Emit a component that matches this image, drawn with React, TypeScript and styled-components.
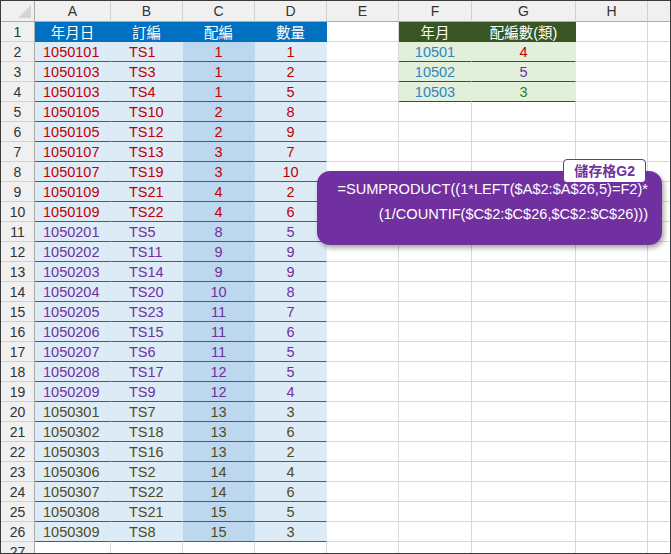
import React from "react"
import styled, { createGlobalStyle } from "styled-components"

const Global = createGlobalStyle`
  body { margin: 0; background: #fff; }
  * { box-sizing: border-box; }
`

const Frame = styled.div`
  position: relative;
  width: 671px;
  height: 554px;
  border: 1px solid #3a3a3a;
  overflow: hidden;
  font-family: "Liberation Sans", "Noto Sans CJK TC", sans-serif;
`

const Sheet = styled.div`
  display: grid;
  grid-template-columns: 34px 76px 72px 72px 72px 72px 73px 104px 72px 1fr;
  grid-template-rows: 21px;
  grid-auto-rows: 20px;
`

const Cell = styled.div<{ $bg?: string; $color?: string; $align?: string; $line?: string; $noV?: boolean }>`
  display: flex;
  align-items: center;
  justify-content: ${(p) => p.$align || "flex-start"};
  padding: 0 8px;
  font-size: 14.5px;
  white-space: nowrap;
  background: ${(p) => p.$bg || "#fff"};
  color: ${(p) => p.$color || "#222"};
  border-bottom: 1px solid ${(p) => p.$line || "#d9d9d9"};
  border-right: 1px solid ${(p) => (p.$noV ? "transparent" : "#d9d9d9")};
`

const ColHead = styled(Cell)`
  background: #f0f0f0;
  justify-content: center;
  color: #333;
  border-bottom: 1px solid #ababab;
  border-right: 1px solid #d0d0d0;
  font-size: 14px;
`

const RowHead = styled(Cell)`
  background: #f0f0f0;
  justify-content: center;
  color: #333;
  padding: 0;
  border-right: 1px solid #ababab;
  border-bottom: 1px solid #d0d0d0;
  font-size: 14px;
`

const Corner = styled(ColHead)`
  border-right: 1px solid #ababab;
  position: relative;
  &::after {
    content: "";
    position: absolute;
    right: 3px;
    bottom: 3px;
    border-left: 13px solid transparent;
    border-bottom: 13px solid #d4d4d4;
  }
`

const Callout = styled.div`
  position: absolute;
  left: 316px;
  top: 170px;
  width: 345px;
  height: 74px;
  background: #7030a0;
  border-radius: 13px;
  box-shadow: 2px 3px 5px rgba(0, 0, 0, 0.35);
  color: #fff;
  font-size: 14.6px;
  text-align: right;
  padding: 6px 14px 0 0;
  line-height: 25px;
`

const Tag = styled.div`
  position: absolute;
  right: 16px;
  top: -12px;
  background: #fff;
  color: #7030a0;
  border: 1px solid #7030a0;
  border-radius: 4px;
  font-weight: bold;
  font-size: 14px;
  line-height: 22px;
  padding: 0 10px;
`

const data: [string, string, number, number][] = [
  ["1050101", "TS1", 1, 1], ["1050103", "TS3", 1, 2], ["1050103", "TS4", 1, 5],
  ["1050105", "TS10", 2, 8], ["1050105", "TS12", 2, 9], ["1050107", "TS13", 3, 7],
  ["1050107", "TS19", 3, 10], ["1050109", "TS21", 4, 2], ["1050109", "TS22", 4, 6],
  ["1050201", "TS5", 8, 5], ["1050202", "TS11", 9, 9], ["1050203", "TS14", 9, 9],
  ["1050204", "TS20", 10, 8], ["1050205", "TS23", 11, 7], ["1050206", "TS15", 11, 6],
  ["1050207", "TS6", 11, 5], ["1050208", "TS17", 12, 5], ["1050209", "TS9", 12, 4],
  ["1050301", "TS7", 13, 3], ["1050302", "TS18", 13, 6], ["1050303", "TS16", 13, 2],
  ["1050306", "TS2", 14, 4], ["1050307", "TS22", 14, 6], ["1050308", "TS21", 15, 5],
  ["1050309", "TS8", 15, 3],
]

const monthColor: Record<string, string> = { "01": "#c00000", "02": "#7030a0", "03": "#4f4a1e" }
const summary = [["10501", "4", "#c00000"], ["10502", "5", "#7030a0"], ["10503", "3", "#2e7d1e"]]

const BLUE = "#0070c0"

export default function App() {
  const rows: React.ReactNode[] = []
  rows.push(<Corner key="c" />)
  "ABCDEFGH".split("").forEach((c) => rows.push(<ColHead key={c}>{c}</ColHead>))
  rows.push(<ColHead key="x" style={{ borderRight: "none" }} />)

  for (let r = 1; r <= 27; r++) {
    rows.push(<RowHead key={"r" + r}>{r}</RowHead>)
    const d = data[r - 2]
    if (r === 1) {
      ;["年月日", "訂編", "配編", "數量"].forEach((t, i) =>
        rows.push(
          <Cell key={"h" + i} $bg={BLUE} $color="#fff" $align="center" $line={BLUE} $noV>
            {t}
          </Cell>
        )
      )
    } else if (d) {
      const col = monthColor[d[0].slice(3, 5)]
      rows.push(<Cell key={r + "a"} $bg="#ddebf7" $color={col} $line={BLUE} $noV>{d[0]}</Cell>)
      rows.push(<Cell key={r + "b"} $bg="#ddebf7" $color={col} $line={BLUE} $noV style={{ paddingLeft: 18 }}>{d[1]}</Cell>)
      rows.push(<Cell key={r + "c"} $bg="#bdd7ee" $color={col} $align="center" $line={BLUE} $noV>{d[2]}</Cell>)
      rows.push(<Cell key={r + "d"} $bg="#ddebf7" $color={col} $align="center" $line={BLUE} $noV>{d[3]}</Cell>)
    } else {
      for (let i = 0; i < 4; i++) rows.push(<Cell key={r + "e" + i} />)
    }
    rows.push(<Cell key={r + "E"} />)
    const s = summary[r - 2]
    if (r === 1) {
      rows.push(<Cell key="fh" $bg="#375623" $color="#fff" $align="center" $line="#375623" $noV>年月</Cell>)
      rows.push(<Cell key="gh" $bg="#375623" $color="#fff" $align="center" $line="#375623" $noV>配編數(類)</Cell>)
    } else if (s) {
      rows.push(<Cell key={r + "F"} $bg="#e2efda" $color="#2e86c1" $align="center" $line="#375623" $noV>{s[0]}</Cell>)
      rows.push(<Cell key={r + "G"} $bg="#e2efda" $color={s[2]} $align="center" $line="#375623" $noV>{s[1]}</Cell>)
    } else {
      rows.push(<Cell key={r + "F"} />)
      rows.push(<Cell key={r + "G"} />)
    }
    rows.push(<Cell key={r + "H"} />)
    rows.push(<Cell key={r + "I"} $noV />)
  }

  return (
    <Frame>
      <Global />
      <Sheet>{rows}</Sheet>
      <Callout>
        <Tag>儲存格G2</Tag>
        <div>=SUMPRODUCT((1*LEFT($A$2:$A$26,5)=F2)*</div>
        <div>(1/COUNTIF($C$2:$C$26,$C$2:$C$26)))</div>
      </Callout>
    </Frame>
  )
}
